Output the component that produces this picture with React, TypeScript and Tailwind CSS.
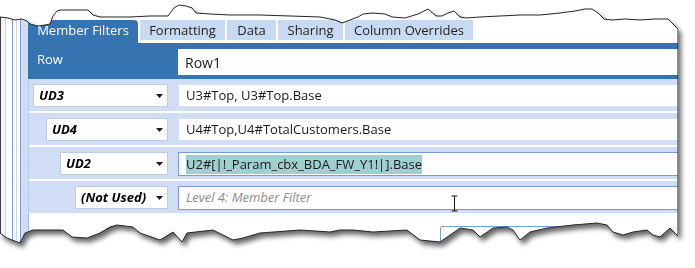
import React from "react"

// torn paper outline, traced from the screenshot (x, y in px)
const topEdge: [number, number][] = [
  [0, 17], [8, 18], [15, 20], [22, 19], [27, 21], [30, 24], [38, 26], [45, 25], [50, 24], [53, 16],
  [57, 11], [60, 10], [72, 10], [88, 10], [93, 15], [100, 17], [115, 17], [130, 17], [150, 16], [168, 16],
  [174, 8], [179, 5], [186, 6], [192, 8], [196, 13], [210, 14], [230, 15], [260, 15], [290, 16],
  [320, 17], [335, 20], [342, 23], [350, 20], [358, 17], [363, 14], [372, 13], [385, 14], [392, 17],
  [405, 18], [418, 14], [428, 9], [436, 16], [442, 16], [448, 13], [454, 11], [460, 17], [466, 18],
  [480, 17], [500, 16], [520, 15], [540, 15], [560, 13], [575, 11], [585, 9], [592, 9], [598, 13],
  [604, 19], [612, 20], [625, 19], [640, 20], [655, 19], [668, 19], [673, 24], [678, 29],
]

const bottomEdge: [number, number][] = [
  [678, 236], [670, 228], [660, 237], [653, 235], [647, 230], [633, 232], [623, 235], [613, 232],
  [607, 225], [597, 223], [573, 225], [547, 228], [530, 232], [520, 240], [513, 230], [507, 227],
  [493, 228], [480, 237], [473, 230], [460, 228], [450, 235], [440, 242], [420, 240], [407, 230],
  [373, 232], [353, 230], [340, 230], [330, 232], [300, 230], [260, 233], [243, 238], [233, 240],
  [213, 230], [187, 233], [182, 242], [173, 232], [160, 240], [140, 233], [133, 227], [117, 225],
  [110, 227], [100, 233], [87, 238], [72, 237], [63, 230], [33, 230], [25, 233], [20, 243],
  [7, 238], [0, 233],
]

const outline = [...topEdge, ...bottomEdge].map(([x, y]) => `${x},${y}`).join(" ")

const tabs = [
  { label: "Member Filters", width: "w-[110px]", active: true },
  { label: "Formatting", width: "w-[85px]" },
  { label: "Data", width: "w-[49px]" },
  { label: "Sharing", width: "w-[65px]" },
  { label: "Column Overrides", width: "w-[128px]" },
]

const filterRows = [
  { level: "UD3", indent: "pl-[4px]", value: "U3#Top, U3#Top.Base" },
  { level: "UD4", indent: "pl-[17px]", value: "U4#Top,U4#TotalCustomers.Base" },
  { level: "UD2", indent: "pl-[31px]", value: "U2#[|!_Param_cbx_BDA_FW_Y1!|].Base", selected: true, focused: true },
  { level: "(Not Used)", indent: "pl-[46px]", placeholder: "Level 4: Member Filter", focused: true },
]

function DropArrow() {
  return (
    <svg width="7" height="4" viewBox="0 0 7 4" className="shrink-0">
      <polygon points="0,0 7,0 3.5,4" fill="#1a1a1a" />
    </svg>
  )
}

export default function App() {
  return (
    <div className="relative h-[268px] w-[695px] overflow-hidden bg-white font-['Open_Sans','Noto_Sans',sans-serif]">
      <svg className="absolute h-0 w-0">
        <defs>
          <clipPath id="torn" clipPathUnits="userSpaceOnUse">
            <polygon points={outline} />
          </clipPath>
        </defs>
      </svg>

      {/* paper + shadow */}
      <div className="relative h-[245px] w-[678px] [filter:drop-shadow(3px_4px_2.5px_rgba(0,0,0,0.6))]">
        <div className="flex h-full w-full bg-white [clip-path:url(#torn)]">
          {/* window edges on the left */}
          <div className="flex h-full w-[28px] shrink-0">
            <div className="w-px bg-[#555]" />
            <div className="w-[4px] bg-[#f3f5f9]" />
            <div className="w-px bg-[#c9d6ee]" />
            <div className="w-[6px] bg-white" />
            <div className="w-px bg-[#7f9dd4]" />
            <div className="w-[3px] bg-white" />
            <div className="w-px bg-[#c9d6ee]" />
            <div className="w-[3px] bg-white" />
            <div className="w-px bg-[#7f9dd4]" />
            <div className="w-[7px] bg-[#d0ddf4]" />
          </div>

          <div className="relative flex min-w-0 flex-1 flex-col">
            <div className="h-[20px] shrink-0" />

            {/* tabs */}
            <div className="flex h-[23px] shrink-0 items-start gap-[2px]">
              {tabs.map((tab) => (
                <div
                  key={tab.label}
                  className={
                    tab.active
                      ? `${tab.width} flex h-[23px] items-start justify-center rounded-t-[4px] bg-[#3573b1] pt-[1px] text-[13px] text-white`
                      : `${tab.width} flex h-[20px] items-start justify-center bg-[#c8daf2] pt-[1px] text-[13px] text-[#1e1e1e]`
                  }
                >
                  {tab.label}
                </div>
              ))}
            </div>

            {/* row header */}
            <div className="flex h-[36px] shrink-0 items-start bg-[#3573b1] pt-[6px]">
              <div className="w-[150px] shrink-0 pl-[9px] pt-[1px] text-[13px] text-white">Row</div>
              <div className="flex h-[26px] flex-1 items-center bg-white pl-[7px] text-[14px] text-[#1a1a1a]">Row1</div>
            </div>

            {/* member filter levels */}
            <div className="flex shrink-0 flex-col border-l border-[#b9cbea] bg-[#d0ddf4]">
              {filterRows.map((row) => (
                <div key={row.level} className="flex h-[34px] items-start border-b-2 border-white pt-[5px]">
                  <div className={`w-[139px] shrink-0 ${row.indent}`}>
                    <div className="flex h-[23px] items-center justify-between border border-[#bccce9] bg-white pl-[5px] pr-[4px]">
                      <span className="text-[13px] font-bold italic text-black">{row.level}</span>
                      <DropArrow />
                    </div>
                  </div>
                  <div
                    className={
                      row.focused
                        ? "ml-[10px] flex h-[24px] flex-1 items-center border-y border-l border-[#7b9bd5] bg-white pl-[7px] text-[13px] text-[#1a1a1a]"
                        : "ml-[10px] flex h-[23px] flex-1 items-center border-y border-l border-[#d6e1f4] bg-white pl-[7px] text-[13px] text-[#1a1a1a]"
                    }
                  >
                    {row.value && row.selected && (
                      <span className="bg-[#9fd0cf] leading-[19px]">{row.value}</span>
                    )}
                    {row.value && !row.selected && <span>{row.value}</span>}
                    {row.placeholder && <span className="italic text-[#8c8c8c]">{row.placeholder}</span>}
                  </div>
                </div>
              ))}
            </div>

            {/* white area below with a button peeking out */}
            <div className="flex-1 border-l border-[#9fb5df] pt-[11px]">
              <div className="ml-[411px] h-[24px] w-[127px] rounded-[2px] border border-[#7b9bd5] bg-white" />
            </div>

            {/* text cursor */}
            <svg width="9" height="17" viewBox="0 0 9 17" className="absolute left-[422px] top-[195px]">
              <path d="M1.5 1h6M4.5 1v15M1.5 16h6" stroke="#111" strokeWidth="1" fill="none" />
            </svg>
          </div>
        </div>

        {/* ragged outline */}
        <svg width="678" height="245" className="pointer-events-none absolute left-0 top-0">
          <polygon points={outline} fill="none" stroke="#262626" strokeWidth="1" />
        </svg>
      </div>
    </div>
  )
}
